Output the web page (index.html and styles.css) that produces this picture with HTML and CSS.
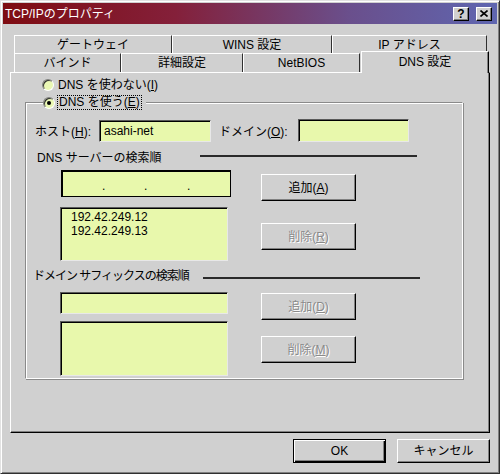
FILE: index.html
```html
<!DOCTYPE html>
<html lang="ja">
<head>
    <meta charset="UTF-8">
    <title>TCP/IPのプロパティ</title>
    <link rel="stylesheet" href="styles.css">
</head>
<body>
    <div class="window">
        <div class="titlebar">
            <span class="title">TCP/IPのプロパティ</span>
            <div class="caption">
                <span class="cap-btn help">?</span>
                <span class="cap-btn close">
                    <svg width="8" height="7" viewBox="0 0 8 7"><path d="M0.5 0.5 L7.5 6.5 M7.5 0.5 L0.5 6.5" stroke="#000" stroke-width="1.6" fill="none"/></svg>
                </span>
            </div>
        </div>

        <div class="tabs">
            <div class="tab-row">
                <div class="tab t-gw">ゲートウェイ</div>
                <div class="tab t-wins">WINS 設定</div>
                <div class="tab t-ip">IP アドレス</div>
            </div>
            <div class="tab-row">
                <div class="tab t-bind">バインド</div>
                <div class="tab t-adv">詳細設定</div>
                <div class="tab t-nb">NetBIOS</div>
                <div class="tab active">DNS 設定</div>
            </div>
        </div>

        <div class="panel">
            <div class="radio-line first">
                <span class="radio"></span>
                <span>DNS を使わない(<u>I</u>)</span>
            </div>

            <div class="group">
                <div class="legend">
                    <span class="radio checked"></span>
                    <span class="focus">DNS を使う(<u>E</u>)</span>
                </div>

                <div class="host-row">
                    <span class="lbl-host">ホスト(<u>H</u>):</span>
                    <div class="field host">asahi-net</div>
                    <span class="lbl-domain">ドメイン(<u>O</u>):</span>
                    <div class="field domain"></div>
                </div>

                <div class="heading dns-head">
                    <span class="head-text">DNS サーバーの検索順</span>
                    <span class="rule"></span>
                </div>

                <div class="row ip-row">
                    <div class="field ipbox">
                        <span class="oct"></span><span class="dot">.</span>
                        <span class="oct"></span><span class="dot">.</span>
                        <span class="oct o3"></span><span class="dot">.</span>
                    </div>
                    <div class="btn">追加(<u>A</u>)</div>
                </div>

                <div class="row list-row">
                    <div class="field listbox">
                        <div>192.42.249.12</div>
                        <div>192.42.249.13</div>
                    </div>
                    <div class="btn off">削除(<u>R</u>)</div>
                </div>

                <div class="heading suffix-head">
                    <span class="head-text">ドメイン サフィックスの検索順</span>
                    <span class="rule"></span>
                </div>

                <div class="row suffix-row">
                    <div class="field suffix"></div>
                    <div class="btn off">追加(<u>D</u>)</div>
                </div>

                <div class="row suffix-list-row">
                    <div class="field suffix-list"></div>
                    <div class="btn off">削除(<u>M</u>)</div>
                </div>
            </div>
        </div>

        <div class="footer">
            <div class="btn default">OK</div>
            <div class="btn">キャンセル</div>
        </div>
    </div>
</body>
</html>
```

FILE: styles.css
```css
* {
    margin: 0;
    padding: 0;
    box-sizing: border-box;
}
body {
    width: 500px;
    height: 474px;
    overflow: hidden;
    font-family: "Liberation Sans", "Noto Sans CJK JP", sans-serif;
    font-size: 12px;
    color: #000;
}
u {
    text-decoration: underline;
    text-underline-offset: 1px;
}
.window {
    width: 500px;
    height: 474px;
    background-color: #d0d0d0;
    border: 1px solid;
    border-color: #e2e2e2 #303030 #303030 #e2e2e2;
    box-shadow: inset 1px 1px #fff, inset -1px -1px #808080;
    padding: 2px;
    display: flex;
    flex-direction: column;
}

/* barre de titre */
.titlebar {
    height: 21px;
    background: linear-gradient(90deg, #7e0c12 0%, #84203a 35%, #6a4f8c 70%, #5f66b0 100%);
    color: #fff;
    display: flex;
    align-items: center;
    justify-content: space-between;
    padding: 0 5px 0 2px;
}
.title {
    font-size: 12px;
    line-height: 14px;
}
.caption {
    display: flex;
    gap: 7px;
}
.cap-btn {
    width: 16px;
    height: 14px;
    background-color: #d0d0d0;
    border: 1px solid;
    border-color: #fff #000 #000 #fff;
    box-shadow: inset -1px -1px #808080;
    display: flex;
    align-items: center;
    justify-content: center;
    color: #000;
}
.help {
    font-weight: bold;
    font-size: 12px;
    line-height: 12px;
}

/* onglets */
.tabs {
    margin-top: 11px;
    padding-left: 11px;
}
.tab-row {
    display: flex;
    height: 18px;
}
.tab-row + .tab-row {
    height: 19px;
}
.tab {
    border-top: 1px solid #fff;
    border-left: 1px solid #fff;
    border-right: 1px solid #303030;
    display: flex;
    align-items: center;
    justify-content: center;
    line-height: 14px;
}
.t-gw { width: 158px; }
.t-wins { width: 160px; }
.t-ip { width: 155px; }
.t-bind { width: 107px; }
.t-adv { width: 122px; }
.t-nb { width: 117px; }
.tab.active {
    position: relative;
    z-index: 1;
    width: 128px;
    height: 22px;
    margin-top: -2px;
    margin-left: 1px;
    background-color: #d0d0d0;
    border-right: 1px solid #000;
    box-shadow: inset -1px 0 #808080;
    padding-bottom: 2px;
}

/* panneau */
.panel {
    margin-left: 7px;
    width: 480px;
    height: 361px;
    border: 1px solid;
    border-color: #fff #000 #000 #fff;
    box-shadow: inset -1px -1px #808080;
    padding: 5px 0 0 31px;
}
.radio-line {
    display: flex;
    align-items: center;
    gap: 4px;
    height: 14px;
    line-height: 14px;
}
.radio {
    width: 12px;
    height: 12px;
    border-radius: 50%;
    border: 1px solid;
    border-color: #808080 #fff #fff #808080;
    box-shadow: inset 1px 1px #303030;
    background-color: #eaf8b4;
    display: flex;
    align-items: center;
    justify-content: center;
}
.radio.checked::after {
    content: "";
    width: 4px;
    height: 4px;
    border-radius: 50%;
    background-color: #000;
}

.group {
    margin: 10px 0 0 -17px;
    width: 438px;
    height: 277px;
    border: 1px solid;
    border-color: #8a8a8a #fff #fff #8a8a8a;
    box-shadow: inset 1px 1px #fff, 1px 1px #8a8a8a;
    padding-left: 1px;
}
.legend {
    margin: -8px 0 0 16px;
    width: 103px;
    height: 15px;
    background-color: #d0d0d0;
    display: flex;
    align-items: center;
    gap: 3px;
}
.focus {
    outline: 1px dotted #000;
    padding: 0 1px;
    line-height: 13px;
}

.host-row {
    display: flex;
    align-items: center;
    margin: 9px 0 0 8px;
    height: 23px;
}
.lbl-host { width: 64px; }
.lbl-domain { width: 79px; margin-left: 8px; }
.field {
    background-color: #e8f8ac;
    border: 1px solid;
    border-color: #5a5a5a #e8e8e8 #e8e8e8 #5a5a5a;
    box-shadow: inset 1px 1px #000;
}
.host {
    width: 112px;
    height: 22px;
    padding: 3px 0 0 4px;
}
.domain {
    width: 111px;
    height: 23px;
}

.heading {
    display: flex;
    align-items: center;
    height: 16px;
}
.head-text {
    white-space: nowrap;
    flex-shrink: 0;
}
.rule {
    height: 2px;
    background-color: #2a2a2a;
}
.dns-head {
    margin: 6px 0 0 10px;
}
.dns-head .head-text { width: 163px; }
.dns-head .rule { width: 217px; }
.suffix-head {
    margin: 5px 0 0 6px;
}
.suffix-head .head-text {
    width: 170px;
    letter-spacing: -1px;
}
.suffix-head .rule { width: 217px; margin-top: 8px; }

.row {
    display: flex;
    align-items: flex-start;
    margin-left: 33px;
}
.ip-row { margin-top: 6px; }
.ipbox {
    width: 170px;
    height: 27px;
    margin-left: 1px;
    border-color: #000;
    display: flex;
    align-items: center;
    padding: 4px 0 0 1px;
}
.oct { width: 39px; }
.o3 { width: 40px; }
.dot {
    width: 3px;
    text-align: center;
}
.ip-row .btn { margin: 4px 0 0 30px; }

.list-row { margin-top: 6px; }
.listbox {
    width: 168px;
    height: 54px;
    padding: 2px 0 0 10px;
    line-height: 14px;
}
.list-row .btn { margin: 16px 0 0 33px; }

.suffix-row { margin-top: 10px; height: 29px; }
.suffix {
    width: 168px;
    height: 22px;
}
.suffix-row .btn { margin: 1px 0 0 33px; }
.suffix-list {
    width: 168px;
    height: 55px;
}
.suffix-list-row .btn { margin: 15px 0 0 33px; }

/* boutons */
.btn {
    width: 95px;
    height: 27px;
    background-color: #d0d0d0;
    border: 1px solid;
    border-color: #fff #000 #000 #fff;
    box-shadow: inset -1px -1px #808080;
    display: flex;
    align-items: center;
    justify-content: center;
    line-height: 14px;
}
.btn.off {
    color: #8a8a8a;
    text-shadow: 1px 1px #fff;
}
.footer {
    display: flex;
    justify-content: flex-end;
    gap: 11px;
    margin-top: 6px;
    padding-right: 7px;
}
.footer .btn {
    width: 93px;
    height: 24px;
}
.btn.default {
    border: 1px solid #000;
    box-shadow: inset 1px 1px #fff, inset -1px -1px #000, inset -2px -2px #808080;
}
```
